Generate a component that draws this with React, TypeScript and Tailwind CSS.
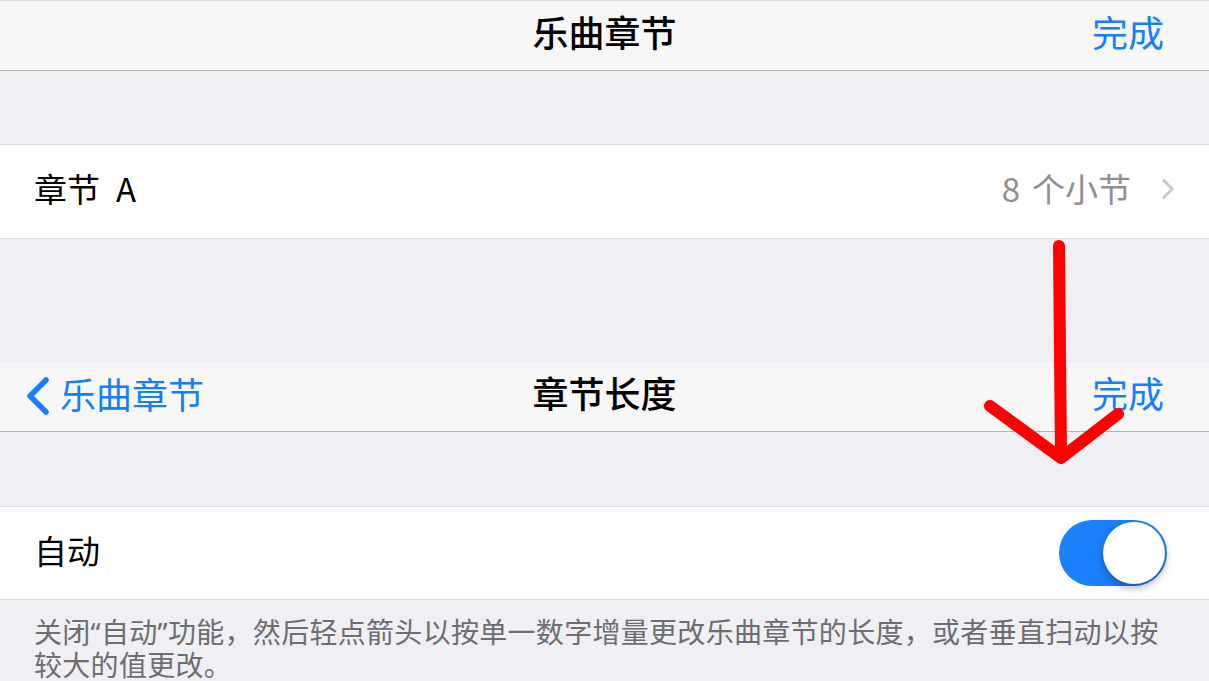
import { ChevronRight } from "lucide-react";

const font = "font-['Noto_Sans_CJK_SC','Noto_Sans',sans-serif]";

function NavBar({ title, back }: { title: string; back?: string }) {
  return (
    <div className="relative flex h-[70px] items-center justify-center border-b border-[#b2b2b2] bg-[#f7f7f8] pb-[9px]">
      {back && (
        <div className="absolute left-[24px] top-0 flex h-full items-center gap-[8px] pb-[2px] text-[#157efb]">
          <svg width="28" height="40" viewBox="0 0 28 40">
            <path
              d="M22 4 L6 20 L22 36"
              fill="none"
              stroke="#157efb"
              strokeWidth="5.5"
              strokeLinecap="round"
              strokeLinejoin="round"
            />
          </svg>
          <span className="pb-[6px] text-[36px] leading-none">{back}</span>
        </div>
      )}
      <span className="text-[36px] font-medium leading-none text-black">{title}</span>
      <span className="absolute right-[45px] top-0 flex h-full items-center pb-[9px] text-[36px] leading-none text-[#157efb]">
        完成
      </span>
    </div>
  );
}

export default function App() {
  return (
    <div className={`relative h-[681px] w-[1209px] overflow-hidden bg-[#efeff4] ${font}`}>
      {/* first screen */}
      <div className="border-t border-[#dcdce0]">
        <NavBar title="乐曲章节" />
      </div>
      <div className="h-[73px]" />
      <div className="flex h-[95px] items-center justify-between border-y border-[#dcdce0] bg-white pb-[6px] pl-[34px] pr-[24px]">
        <span className="text-[33px] leading-none text-black">
          章节<span className="ml-[16px]">A</span>
        </span>
        <div className="flex items-center gap-[20px]">
          <span className="text-[33px] leading-none text-[#8e8e93]">
            8<span className="ml-[12px]">个小节</span>
          </span>
          <ChevronRight size={34} strokeWidth={2} className="text-[#c7c7cc]" />
        </div>
      </div>
      <div className="h-[123px]" />

      {/* second screen */}
      <NavBar title="章节长度" back="乐曲章节" />
      <div className="h-[74px]" />
      <div className="flex h-[94px] items-center justify-between border-y border-[#dcdce0] bg-white pl-[34px] pr-[42px]">
        <span className="pb-[5px] text-[33px] leading-none text-black">自动</span>
        <div className="flex h-[66px] w-[108px] items-center justify-end rounded-full bg-[#1a80fb] pr-[2px]">
          <div className="h-[62px] w-[62px] rounded-full bg-white shadow-[0_4px_8px_rgba(0,0,0,0.3)]" />
        </div>
      </div>
      <p className="pl-[34px] pr-[40px] pt-[15px] text-[28px] leading-[32px] tracking-[0.3px] text-[#6d6d72]">
        关闭<span className="font-['Noto_Sans',sans-serif]">“</span>自动
        <span className="font-['Noto_Sans',sans-serif]">”</span>
        功能，然后轻点箭头以按单一数字增量更改乐曲章节的长度，或者垂直扫动以按较大的值更改。
      </p>

      {/* red annotation arrow */}
      <svg className="absolute left-0 top-0" width="1209" height="681" viewBox="0 0 1209 681">
        <path
          d="M1059 246 L1061 458 M990 406 L1061 458 L1118 414"
          fill="none"
          stroke="#ff0000"
          strokeWidth="12"
          strokeLinecap="round"
          strokeLinejoin="round"
        />
      </svg>
    </div>
  );
}
